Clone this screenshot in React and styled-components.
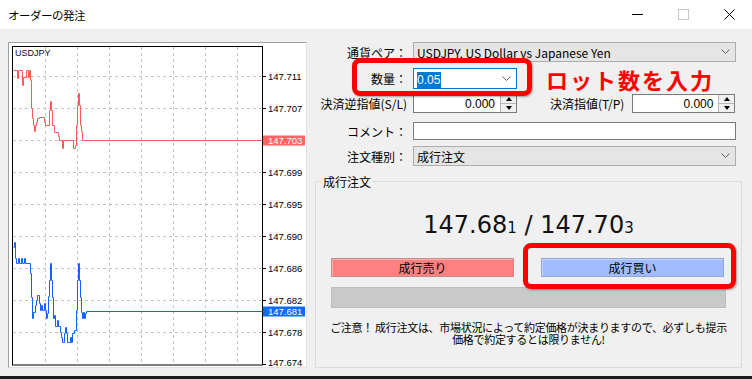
import React from 'react';
import styled, { createGlobalStyle } from 'styled-components';

const GlobalStyle = createGlobalStyle`
  html, body {
    margin: 0;
    padding: 0;
    background: #f0f0f0;
  }
`;

const JP = `"Noto Sans CJK JP", "Liberation Sans", sans-serif`;

const Window = styled.div`
  position: relative;
  width: 752px;
  height: 379px;
  display: flex;
  flex-direction: column;
  font-family: ${JP};
  font-size: 12px;
  color: #000;
  overflow: hidden;
`;

const TitleBar = styled.div`
  height: 29px;
  flex: none;
  background: #fff;
  display: flex;
  align-items: center;
  padding-left: 8px;
`;

const Title = styled.div`
  flex: 1;
  font-size: 11.5px;
  letter-spacing: -0.5px;
`;

const WinButton = styled.div`
  width: 46px;
  height: 29px;
  display: flex;
  align-items: center;
  justify-content: center;
`;

const Body = styled.div`
  flex: 1;
  display: flex;
  align-items: flex-start;
  padding: 13px 0 0 8px;
  background: #f0f0f0;
`;

const BottomEdge = styled.div`
  height: 3px;
  flex: none;
  background: #1c1c1c;
`;

const ChartPanel = styled.div`
  width: 299px;
  height: 326px;
  box-sizing: border-box;
  border: 1px solid;
  border-color: #a0a0a0 #e3e3e3 #e3e3e3 #a0a0a0;
  background: #fff;
  svg {
    display: block;
  }
`;

const RightPanel = styled.div`
  margin-left: 8px;
  width: 427px;
  display: flex;
  flex-direction: column;
`;

const FormRow = styled.div`
  display: flex;
  align-items: center;
  height: ${(p) => p.h}px;
  margin-top: ${(p) => p.mt || 0}px;
`;

const Label = styled.div`
  width: ${(p) => (p.auto ? 'auto' : '92px')};
  margin-left: ${(p) => p.ml || 0}px;
  margin-right: ${(p) => (p.auto ? 8 : 6)}px;
  text-align: right;
  white-space: nowrap;
  font-size: 12px;
`;

const Combo = styled.div`
  width: ${(p) => p.w}px;
  height: 100%;
  box-sizing: border-box;
  display: flex;
  align-items: center;
  padding-left: 3px;
  background: ${(p) => (p.focused ? '#fff' : '#e5e5e5')};
  border: 1px solid ${(p) => (p.focused ? '#0078d7' : '#adadad')};
  font-size: 12px;
`;

const ComboText = styled.div`
  flex: 1;
  white-space: nowrap;
`;

const Selected = styled.span`
  background: #0078d7;
  color: #fff;
  padding: 1px 1px 1px 0;
  font-family: "Liberation Sans", sans-serif;
`;

const Chevron = styled.svg`
  margin-right: 5px;
  flex: none;
`;

const LotHint = styled.div`
  margin-left: 29px;
  color: #f00;
  font-size: 22px;
  font-weight: 700;
  letter-spacing: 2px;
  white-space: nowrap;
`;

const SpinBox = styled.div`
  width: ${(p) => p.w}px;
  height: 100%;
  box-sizing: border-box;
  display: flex;
  background: #fff;
  border: 1px solid #7a7a7a;
`;

const SpinField = styled.div`
  flex: 1;
  display: flex;
  align-items: center;
  justify-content: flex-end;
  padding-right: 5px;
  font-family: "Liberation Sans", sans-serif;
  font-size: 12px;
`;

const SpinButtons = styled.div`
  width: 15px;
  display: flex;
  flex-direction: column;
  border-left: 1px solid #b5b5b5;
  background: #f0f0f0;
`;

const SpinHalf = styled.div`
  flex: 1;
  display: flex;
  align-items: center;
  justify-content: center;
  & + & {
    border-top: 1px solid #b5b5b5;
  }
`;

const Arrow = styled.div`
  width: 0;
  height: 0;
  border-left: 3.5px solid transparent;
  border-right: 3.5px solid transparent;
  ${(p) =>
    p.up ? 'border-bottom: 4px solid #000;' : 'border-top: 4px solid #000;'}
`;

const TextInput = styled.div`
  width: ${(p) => p.w}px;
  height: 100%;
  box-sizing: border-box;
  background: #fff;
  border: 1px solid #7a7a7a;
`;

const GroupBox = styled.div`
  position: relative;
  margin-top: 15px;
  height: 187px;
  box-sizing: border-box;
  border: 1px solid #dcdcdc;
  display: flex;
  flex-direction: column;
  align-items: center;
`;

const Legend = styled.div`
  position: absolute;
  top: -9px;
  left: 5px;
  padding: 0 2px;
  background: #f0f0f0;
  font-size: 12px;
`;

const PriceLine = styled.div`
  margin-top: 28px;
  height: 30px;
  line-height: 30px;
  font-family: "DejaVu Sans", sans-serif;
  font-size: 24px;
  color: #111;
`;

const Small = styled.span`
  font-size: 15px;
`;

const ButtonRow = styled.div`
  margin-top: 18px;
  width: 395px;
  display: grid;
  grid-template-columns: 183px 183px;
  column-gap: 27px;
`;

const OrderButton = styled.div`
  height: 19px;
  box-sizing: border-box;
  display: flex;
  align-items: center;
  justify-content: center;
  font-size: 12px;
  background: ${(p) => (p.buy ? '#a0bcff' : '#ff8080')};
  border: 1px solid ${(p) => (p.buy ? '#8ea6d8' : '#c98a8a')};
  box-shadow: inset 1px 1px 0 ${(p) => (p.buy ? '#c4d4ff' : '#ffb0b0')};
`;

const GrayBar = styled.div`
  margin-top: 10px;
  width: 395px;
  height: 21px;
  box-sizing: border-box;
  background: #c9c9c9;
  border: 1px solid #bdbdbd;
`;

const Notice = styled.div`
  margin-top: 13px;
  display: flex;
  flex-direction: column;
  align-items: center;
  gap: 0;
`;

const NoticeLine = styled.div`
  height: 12px;
  line-height: 12px;
  font-size: 11px;
  letter-spacing: -0.3px;
  white-space: nowrap;
`;

const Highlight = styled.div`
  position: absolute;
  left: ${(p) => p.x}px;
  top: ${(p) => p.y}px;
  width: ${(p) => p.w}px;
  height: ${(p) => p.h}px;
  box-sizing: border-box;
  border: 5px solid #f00;
  border-radius: 8px;
  box-shadow: 1px 1px 2px rgba(0, 0, 0, 0.35);
  pointer-events: none;
`;

const redPts = [
  [13, 70], [17, 70], [17, 78], [18, 78], [18, 70], [22, 70], [22, 85], [23, 85],
  [23, 77], [26, 77], [26, 70], [28, 70], [28, 77], [29, 77], [29, 70], [30, 70],
  [30, 80], [31, 80], [31, 108], [32, 108], [32, 118], [33, 118], [33, 125], [34, 125],
  [34, 131], [35, 131], [35, 125], [36, 125], [36, 122], [37, 122], [37, 118], [39, 118],
  [39, 117], [44, 117], [44, 122], [45, 122], [45, 125], [49, 125], [49, 110], [50, 110],
  [50, 101], [51, 101], [51, 110], [52, 110], [52, 125], [54, 125], [54, 132], [58, 132],
  [58, 136], [59, 136], [59, 140], [62, 140], [62, 148], [63, 148], [63, 140], [73, 140],
  [73, 148], [75, 148], [75, 145], [76, 145], [76, 125], [77, 125], [77, 105], [78, 105],
  [78, 93], [79, 93], [79, 105], [80, 105], [80, 125], [81, 125], [81, 131], [82, 131],
  [82, 140], [262, 140],
];

const bluePts = [
  [13, 247], [14, 247], [14, 242], [15, 242], [15, 258], [16, 258], [16, 263], [18, 263],
  [18, 258], [19, 258], [19, 263], [21, 263], [21, 258], [22, 258], [22, 263], [24, 263],
  [24, 258], [25, 258], [25, 263], [30, 263], [30, 273], [31, 273], [31, 297], [32, 297],
  [32, 318], [33, 318], [33, 312], [35, 312], [35, 305], [36, 305], [36, 300], [37, 300],
  [37, 295], [39, 295], [39, 303], [40, 303], [40, 310], [41, 310], [41, 305], [42, 305],
  [42, 310], [44, 310], [44, 303], [45, 303], [45, 310], [46, 310], [46, 318], [47, 318],
  [47, 313], [48, 313], [48, 296], [49, 296], [49, 280], [50, 280], [50, 263], [51, 263],
  [51, 280], [52, 280], [52, 297], [53, 297], [53, 318], [54, 318], [54, 315], [55, 315],
  [55, 326], [57, 326], [57, 320], [58, 320], [58, 326], [60, 326], [60, 332], [61, 332],
  [61, 337], [62, 337], [62, 342], [64, 342], [64, 333], [65, 333], [65, 327], [66, 327],
  [66, 333], [67, 333], [67, 342], [70, 342], [70, 337], [71, 337], [71, 342], [72, 342],
  [72, 333], [74, 333], [74, 330], [76, 330], [76, 310], [77, 310], [77, 280], [78, 280],
  [78, 263], [79, 263], [79, 280], [80, 280], [80, 297], [81, 297], [81, 312], [82, 312],
  [82, 318], [83, 318], [83, 312], [84, 312], [84, 318], [85, 318], [85, 313], [86, 313],
  [86, 311], [262, 311],
];

const levels = [
  [76, '147.711'], [108, '147.707'], [172, '147.699'], [204, '147.695'],
  [236, '147.690'], [268, '147.686'], [300, '147.682'], [332, '147.678'], [362, '147.674'],
];

// half-pixel offsets keep the 1px steps crisp
const toPoints = (pts) => pts.map(([x, y]) => `${x + 0.5},${y + 0.5}`).join(' ');

const AXIS_FONT = 'Liberation Sans, sans-serif';

function PriceChart() {
  const gridX = [45, 77, 109, 141, 173, 205, 237];
  const gridY = [76, 108, 140, 172, 204, 236, 268, 300, 332];
  return (
    <svg width="297" height="324" viewBox="9 43 297 324">
      {gridX.map((x) => (
        <line key={x} x1={x + 0.5} y1="47" x2={x + 0.5} y2="364" stroke="#c4c4c4" strokeDasharray="3 3" />
      ))}
      {gridY.map((y) => (
        <line key={y} x1="13" y1={y + 0.5} x2="262" y2={y + 0.5} stroke="#c4c4c4" strokeDasharray="3 3" />
      ))}
      <rect x="12.5" y="46.5" width="250" height="318.5" fill="none" stroke="#000" />
      {[...gridY, 364].map((y) => (
        <line key={'t' + y} x1="263" y1={y + 0.5} x2="266" y2={y + 0.5} stroke="#000" />
      ))}
      <text x="15" y="56" fontSize="9" fontFamily={AXIS_FONT} fill="#0a0a30">USDJPY</text>
      <polyline points={toPoints(redPts)} fill="none" stroke="#ff5a5a" />
      <polyline points={toPoints(bluePts)} fill="none" stroke="#1264ff" />
      {levels.map(([y, v]) => (
        <text key={v} x="268" y={y + 3.5} fontSize="9.5" fontFamily={AXIS_FONT} fill="#000">{v}</text>
      ))}
      <rect x="263" y="135.5" width="42" height="10" fill="#ff6464" />
      <text x="268" y="143.5" fontSize="9.5" fontFamily={AXIS_FONT} fill="#fff">147.703</text>
      <rect x="263" y="306.5" width="42" height="10" fill="#0a6cff" />
      <text x="268" y="314.5" fontSize="9.5" fontFamily={AXIS_FONT} fill="#fff">147.681</text>
    </svg>
  );
}

function ChevronDown() {
  return (
    <Chevron width="9" height="6" viewBox="0 0 9 6">
      <polyline points="0.5,0.5 4.5,4.5 8.5,0.5" fill="none" stroke="#606060" />
    </Chevron>
  );
}

function Spinner({ w, value }) {
  return (
    <SpinBox w={w}>
      <SpinField>{value}</SpinField>
      <SpinButtons>
        <SpinHalf><Arrow up /></SpinHalf>
        <SpinHalf><Arrow /></SpinHalf>
      </SpinButtons>
    </SpinBox>
  );
}

export default function App() {
  return (
    <>
      <GlobalStyle />
      <Window>
        <TitleBar>
          <Title>オーダーの発注</Title>
          <WinButton>
            <svg width="11" height="1"><line x1="0" y1="0.5" x2="11" y2="0.5" stroke="#000" /></svg>
          </WinButton>
          <WinButton>
            <svg width="11" height="11"><rect x="0.5" y="0.5" width="10" height="10" fill="none" stroke="#c8c8c8" /></svg>
          </WinButton>
          <WinButton>
            <svg width="11" height="11"><path d="M0.5 0.5 L10.5 10.5 M10.5 0.5 L0.5 10.5" stroke="#000" fill="none" /></svg>
          </WinButton>
        </TitleBar>
        <Body>
          <ChartPanel>
            <PriceChart />
          </ChartPanel>
          <RightPanel>
            <FormRow h={20}>
              <Label>通貨ペア：</Label>
              <Combo w={323}>
                <ComboText>USDJPY, US Dollar vs Japanese Yen</ComboText>
                <ChevronDown />
              </Combo>
            </FormRow>
            <FormRow h={21} mt={6}>
              <Label>数量：</Label>
              <Combo w={104} focused>
                <ComboText><Selected>0.05</Selected></ComboText>
                <ChevronDown />
              </Combo>
              <LotHint>ロット数を入力</LotHint>
            </FormRow>
            <FormRow h={19} mt={5}>
              <Label>決済逆指値(S/L)</Label>
              <Spinner w={104} value="0.000" />
              <Label auto ml={33}>決済指値(T/P)</Label>
              <Spinner w={103} value="0.000" />
            </FormRow>
            <FormRow h={18} mt={9}>
              <Label>コメント：</Label>
              <TextInput w={323} />
            </FormRow>
            <FormRow h={20} mt={6}>
              <Label>注文種別：</Label>
              <Combo w={323}>
                <ComboText>成行注文</ComboText>
                <ChevronDown />
              </Combo>
            </FormRow>
            <GroupBox>
              <Legend>成行注文</Legend>
              <PriceLine>
                147.68<Small>1</Small> / 147.70<Small>3</Small>
              </PriceLine>
              <ButtonRow>
                <OrderButton>成行売り</OrderButton>
                <OrderButton buy>成行買い</OrderButton>
              </ButtonRow>
              <GrayBar />
              <Notice>
                <NoticeLine>ご注意！ 成行注文は、市場状況によって約定価格が決まりますので、必ずしも提示</NoticeLine>
                <NoticeLine>価格で約定するとは限りません!</NoticeLine>
              </Notice>
            </GroupBox>
          </RightPanel>
        </Body>
        <BottomEdge />
        <Highlight x={352} y={58} w={180} h={38} />
        <Highlight x={523} y={243} w={213} h={46} />
      </Window>
    </>
  );
}
